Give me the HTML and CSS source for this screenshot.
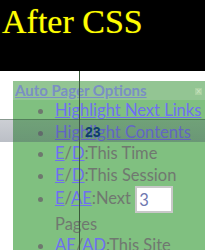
FILE: index.html
```html
<!DOCTYPE html>
<html lang="en">
<head>
    <meta charset="UTF-8">
    <title>After CSS</title>
    <link rel="stylesheet" href="styles.css">
</head>
<body>
    <div class="header">
        <h1>After CSS</h1>
    </div>
    <div class="stage">
        <div class="pager">
            <div class="pager-title">
                <a href="#">Auto Pager Options</a>
                <span class="close">&#215;</span>
            </div>
            <ul class="options">
                <li><a href="#">Highlight Next Links</a></li>
                <li><a href="#">Highlight Contents</a></li>
                <li><a href="#">E</a>/<a href="#">D</a>:This Time</li>
                <li><a href="#">E</a>/<a href="#">D</a>:This Session</li>
                <li class="pages"><a href="#">E</a>/<a href="#">AE</a>:Next <input type="text" value="3"> Pages</li>
                <li><a href="#">AE</a>/<a href="#">AD</a>:This Site</li>
            </ul>
        </div>
        <div class="vline"></div>
        <div class="hband"></div>
        <div class="counter">23</div>
    </div>
</body>
</html>
```

FILE: styles.css
```css
body, html {
    margin: 0;
    padding: 0;
    overflow: hidden;
    background: #fff;
}

.header {
    background: #000;
    height: 71px;
}

.header h1 {
    margin: 0;
    padding: 2px 0 0 2px;
    font-family: "Liberation Serif", serif;
    font-weight: normal;
    font-size: 34px;
    line-height: 40px;
    color: #ffff00;
    text-shadow: 0 0 1px #8a8a00;
}

.stage {
    position: relative;
    height: 179px;
    padding-top: 10px;
    box-sizing: border-box;
}

.pager {
    margin-left: 13px;
    height: 100%;
    background: #80c080;
    font-family: Lato, "Open Sans", sans-serif;
    font-size: 16.5px;
    color: #727a72;
}

.pager-title {
    display: flex;
    justify-content: space-between;
    align-items: center;
    height: 19px;
    padding: 0 3px 0 2px;
    background: #93c593;
}

.pager-title a {
    color: #7a8fc4;
    font-weight: bold;
    font-size: 15px;
    line-height: 19px;
}

.close {
    width: 7px;
    height: 7px;
    margin-top: 2px;
    background: #a8d0a0;
    color: #c8e4c0;
    font-family: "DejaVu Sans", sans-serif;
    font-size: 8px;
    line-height: 7px;
    text-align: center;
}

.options {
    margin: 0;
    padding: 0 0 0 42px;
    list-style: disc;
    color: #707870;
}

.options li {
    line-height: 21.5px;
}

.options li::marker {
    color: #6e786e;
}

.options a {
    color: #6f6ff0;
}

.options .pages {
    line-height: 22px;
    width: 126px;
}

.options input {
    width: 38px;
    height: 27px;
    padding: 0 2px;
    margin: 0;
    border: 2px solid #c8c8c8;
    box-sizing: border-box;
    font-family: Lato, sans-serif;
    font-size: 16.5px;
    color: #6e78b0;
    vertical-align: middle;
    background: #fff;
}

.vline {
    position: absolute;
    left: 79px;
    top: 0;
    width: 1px;
    height: 100%;
    background: #3a5a3a;
}

.hband {
    position: absolute;
    left: 0;
    top: 48px;
    width: 100%;
    height: 22px;
    background: linear-gradient(rgba(70, 80, 100, 0.28), rgba(70, 80, 100, 0.36));
    border-top: 1px solid rgba(40, 80, 40, 0.35);
}

.counter {
    position: absolute;
    left: 85px;
    top: 53px;
    font-family: "Liberation Sans", Arial, sans-serif;
    font-weight: bold;
    font-size: 14px;
    color: #0d3d6a;
}
```
